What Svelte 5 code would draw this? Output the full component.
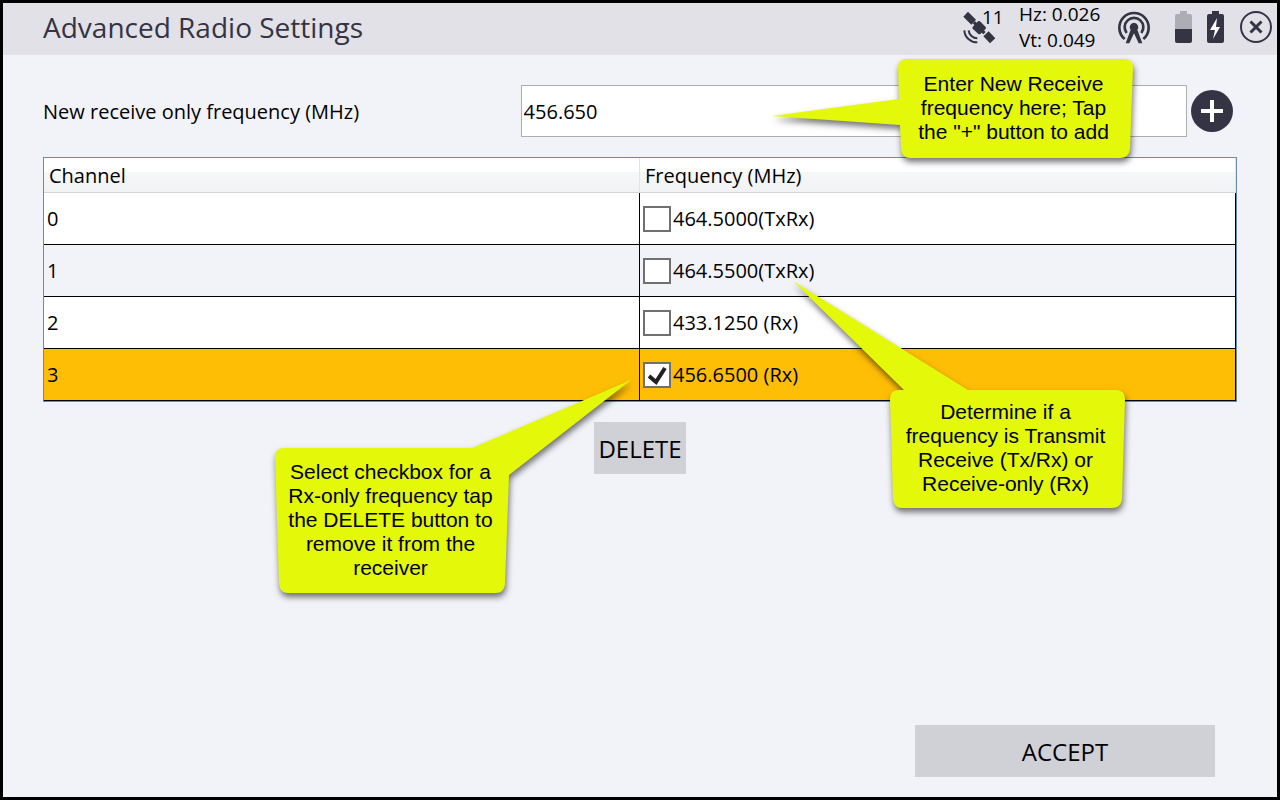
<script lang="ts">
	interface Channel {
		id: number;
		label: string;
		selected: boolean;
	}

	let frequency = $state('456.650');
	let channels: Channel[] = $state([
		{ id: 0, label: '464.5000(TxRx)', selected: false },
		{ id: 1, label: '464.5500(TxRx)', selected: false },
		{ id: 2, label: '433.1250 (Rx)', selected: false },
		{ id: 3, label: '456.6500 (Rx)', selected: true }
	]);

	function addFrequency() {
		const value = Number.parseFloat(frequency);
		if (Number.isNaN(value)) return;

		const id = channels.length ? channels[channels.length - 1].id + 1 : 0;
		channels.push({ id, label: `${value.toFixed(4)} (Rx)`, selected: false });
	}

	// only receive-only channels can be removed
	function deleteSelected() {
		channels = channels.filter((c) => !c.selected || c.label.includes('TxRx'));
	}
</script>

<div class="screen">
	<header>
		<h1>Advanced Radio Settings</h1>
		<div class="status">
			<div class="satellites">
				<svg width="34" height="34" viewBox="0 0 102 102" aria-hidden="true">
					<path d="M4 20L18 5L42 29L28 44ZM64 79L80 64L100 85L84 100Z" />
					<path d="M32 51L37 45L32 40L39 33L44 38L48 34Q51 32 54 34L71 51Q73 54 71 57L66 61L71 66L64 73L59 68L55 72Q52 74 49 72L32 56Q30 53 32 51Z" />
					<path class="line" d="M7 61A38 38 0 0 0 46 97M20 61A26 26 0 0 0 46 85" />
				</svg>
				<span>11</span>
			</div>
			<div class="precision">
				<div>Hz: 0.026</div>
				<div>Vt: 0.049</div>
			</div>
			<svg class="antenna" width="34" height="34" viewBox="0 0 102 102" aria-hidden="true">
				<path class="ring" d="M23 87A44 44 0 1 1 79 87" />
				<path class="ring" d="M29 69A28 28 0 1 1 73 69" />
				<path d="M51 38A13 13 0 0 1 61 59L76 100H65L51 70L37 100H26L41 59A13 13 0 0 1 51 38Z" />
			</svg>
			<svg class="battery" width="17" height="32" viewBox="0 0 17 32" aria-hidden="true">
				<path class="empty" d="M5 0H12V3H15Q17 3 17 5V18H0V5Q0 3 2 3H5Z" />
				<path d="M0 18H17V30Q17 32 15 32H2Q0 32 0 30Z" />
			</svg>
			<svg class="battery" width="17" height="32" viewBox="0 0 17 32" aria-hidden="true">
				<path d="M5 0H12V3H15Q17 3 17 5V30Q17 32 15 32H2Q0 32 0 30V5Q0 3 2 3H5Z" />
				<path class="bolt" d="M10 7L3 19H8L6 28L13 16H9Z" />
			</svg>
			<button class="close" aria-label="Close">
				<svg width="34" height="34" viewBox="0 0 34 34" aria-hidden="true">
					<circle cx="17" cy="17" r="15" />
					<path d="M11.500 11.500L22.500 22.500M22.500 11.500L11.500 22.500" />
				</svg>
			</button>
		</div>
	</header>

	<main>
		<div class="field">
			<label for="frequency">New receive only frequency (MHz)</label>
			<input id="frequency" type="text" bind:value={frequency} />
			<button class="add" aria-label="Add frequency" onclick={addFrequency}>
				<svg width="42" height="42" viewBox="0 0 42 42" aria-hidden="true">
					<path d="M21 10V32M10 21H32" />
				</svg>
			</button>

			<div class="callout enter">
				<svg aria-hidden="true">
					<path d="M9 0H226Q235 0 235 9L232 90Q231 99 222 99H12Q4 99 3 90L2 66L-126 57L1 40L0 9Q0 0 9 0Z" />
				</svg>
				<p>Enter New Receive<br />frequency here; Tap<br />the "+" button to add</p>
			</div>
		</div>

		<div class="channels">
			<table>
				<thead>
					<tr>
						<th>Channel</th>
						<th>Frequency (MHz)</th>
					</tr>
				</thead>
				<tbody>
					{#each channels as channel (channel.id)}
						<tr class:selected={channel.selected}>
							<td>{channel.id}</td>
							<td>
								<label class="option">
									<span class="box">
										<input type="checkbox" bind:checked={channel.selected} />
										{#if channel.selected}
											<svg width="28" height="26" viewBox="0 0 28 26" aria-hidden="true">
												<path d="M6 14L13 20L22 6" />
											</svg>
										{/if}
									</span>
									{channel.label}
								</label>
							</td>
						</tr>
					{/each}
				</tbody>
			</table>

			<div class="callout determine">
				<svg aria-hidden="true">
					<path d="M9 0H14L-97 -109L78 0H226Q235 0 235 9L232 109Q231 118 222 118H12Q4 118 3 109L0 9Q0 0 9 0Z" />
				</svg>
				<p>Determine if a<br />frequency is Transmit<br />Receive (Tx/Rx) or<br />Receive-only (Rx)</p>
			</div>

			<div class="callout select">
				<svg aria-hidden="true">
					<path d="M9 0H197L356 -68L234 27L230 136Q229 145 221 145H13Q5 145 4 136L0 9Q0 0 9 0Z" />
				</svg>
				<p>Select checkbox for a<br />Rx-only frequency tap<br />the DELETE button to<br />remove it from the<br />receiver</p>
			</div>
		</div>

		<button class="action delete" onclick={deleteSelected}>DELETE</button>
	</main>

	<footer>
		<button class="action accept">ACCEPT</button>
	</footer>
</div>

<style>
	:global(body) {
		background: #f2f3f8;
	}

	.screen {
		display: flex;
		flex-direction: column;
		box-sizing: border-box;
		min-height: 100vh;
		border: 3px solid #000;
		background: #f2f3f8;
		color: #000;
		font-family: 'Open Sans', 'Noto Sans', sans-serif;
		font-size: 20px;
	}

	button {
		padding: 0;
		border: 0;
		font: inherit;
		color: inherit;
		cursor: pointer;
	}

	svg {
		display: block;
		fill: #343445;
	}

	header {
		display: flex;
		align-items: center;
		justify-content: space-between;
		box-sizing: border-box;
		height: 52px;
		padding: 0 4px 4px 40px;
		background: #e1e1e7;
	}

	h1 {
		margin: 0;
		font-size: 28px;
		font-weight: 400;
		color: #343445;
	}

	.status {
		display: flex;
		align-items: center;
	}

	.satellites {
		display: flex;
		align-items: flex-start;
		width: 57px;
	}

	.satellites span {
		margin-left: -14px;
		font-size: 19px;
		line-height: 14px;
	}

	.line {
		fill: none;
		stroke: #343445;
		stroke-width: 6;
	}

	.precision {
		width: 98px;
		font-size: 19px;
		line-height: 26px;
	}

	.antenna {
		margin-right: 24px;
	}

	.ring {
		fill: none;
		stroke: #343445;
		stroke-width: 8;
	}

	.battery {
		margin-right: 15px;
	}

	.empty {
		fill: #adadb5;
	}

	.bolt {
		fill: #fff;
	}

	.close {
		background: none;
	}

	.close svg {
		fill: none;
		stroke: #343445;
		stroke-width: 2;
	}

	.close path {
		stroke-width: 3;
	}

	main {
		display: flex;
		flex: 1;
		flex-direction: column;
		gap: 20px;
		padding: 30px 40px;
	}

	.field {
		position: relative;
		display: flex;
		align-items: center;
	}

	.field label {
		flex: 0 0 40%;
	}

	.field input {
		flex: 1;
		box-sizing: border-box;
		min-width: 0;
		height: 52px;
		padding: 0 2px;
		border: 1px solid #abadb3;
		background: #fff;
		font: inherit;
	}

	.add {
		margin: 0 4px;
		border-radius: 50%;
		background: #343445;
	}

	.add path {
		stroke: #fff;
		stroke-width: 4;
	}

	.channels {
		position: relative;
		border: 1px solid #688caf;
	}

	table {
		width: 100%;
		table-layout: fixed;
		border-spacing: 0;
		background: #fff;
	}

	th {
		height: 32px;
		padding: 2px 5px 0;
		border-right: 1px solid #e2e3e6;
		border-bottom: 1px solid #d5d5d5;
		background: linear-gradient(#fff 40%, #f7f8fa 40%, #f1f2f4);
		font-weight: 400;
		line-height: 32px;
		text-align: left;
	}

	td {
		height: 51px;
		padding: 0 3px;
		border-right: 1px solid #000;
		border-bottom: 1px solid #000;
	}

	tbody tr:nth-child(even) {
		background: #f2f3f8;
	}

	tbody tr.selected {
		background: #ffbe06;
	}

	.option {
		display: flex;
		align-items: center;
		gap: 2px;
	}

	.box {
		display: grid;
	}

	.box > * {
		grid-area: 1 / 1;
	}

	.box input {
		appearance: none;
		box-sizing: border-box;
		width: 28px;
		height: 26px;
		margin: 0;
		border: 2px solid #707070;
		background: #fff;
	}

	.box svg {
		z-index: 0;
		pointer-events: none;
	}

	.box path {
		fill: none;
		stroke: #212121;
		stroke-width: 4;
	}

	.action {
		height: 52px;
		background: #d0d0d7;
		font-size: 24px;
	}

	.delete {
		align-self: center;
		width: 92px;
	}

	footer {
		display: flex;
		justify-content: flex-end;
		padding: 0 62px 20px;
	}

	.accept {
		width: 300px;
	}

	.callout {
		position: absolute;
		z-index: 1;
		display: flex;
		align-items: center;
		justify-content: center;
		box-sizing: border-box;
		width: 235px;
		padding: 0 4px 2px 0;
		font-family: 'Liberation Sans', Arial, sans-serif;
		font-size: 21px;
		line-height: 24px;
		text-align: center;
		white-space: nowrap;
		pointer-events: none;
	}

	.callout svg {
		position: absolute;
		inset: 0;
		width: 100%;
		height: 100%;
		overflow: visible;
		fill: #e3f909;
		filter: drop-shadow(1px 4px 3px rgba(0, 0, 0, 0.55));
	}

	.callout p {
		position: relative;
		margin: 0;
	}

	.enter {
		top: -26px;
		left: calc(50% + 258px);
		height: 99px;
	}

	.determine {
		top: 232px;
		left: calc(50% + 250px);
		height: 118px;
	}

	.select {
		top: 290px;
		left: calc(50% - 365px);
		height: 145px;
	}
</style>
